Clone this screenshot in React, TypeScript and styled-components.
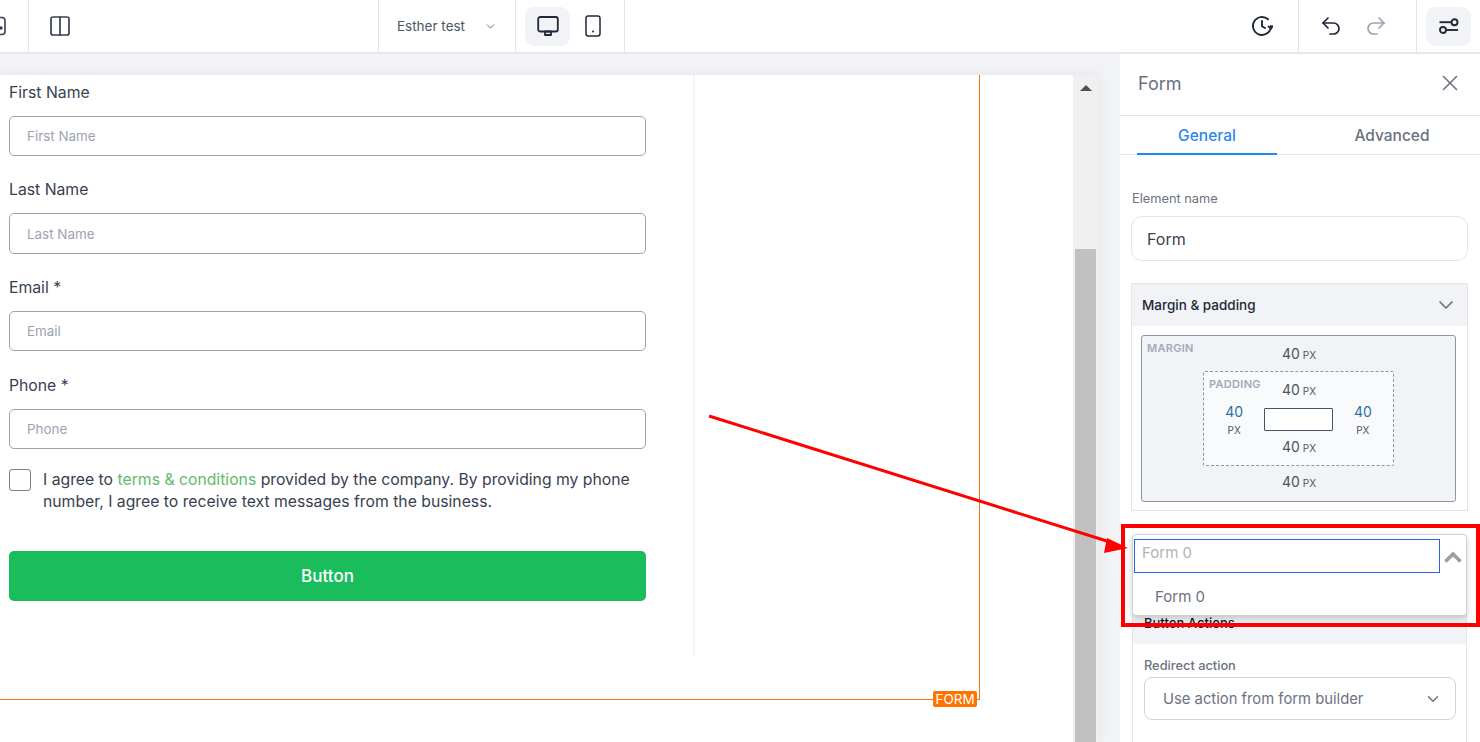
import React from 'react'
import styled, { createGlobalStyle } from 'styled-components'
import { ChevronDown, Columns2, Redo2, Undo2, X } from 'lucide-react'

const GlobalStyle = createGlobalStyle`
    html, body {
        margin: 0;
        height: 100%;
        overflow: hidden;
        background: #fff;
        font-family: Inter, "Liberation Sans", sans-serif;
    }
    * { box-sizing: border-box; }
`

const Screen = styled.div`
    position: relative;
    width: 1480px;
    height: 742px;
    overflow: hidden;
    display: flex;
    flex-direction: column;
`

const Toolbar = styled.header`
    height: 54px;
    flex: none;
    display: flex;
    background: #fff;
    border-bottom: 2px solid #e5e7eb;
`

const ToolGroup = styled.div<{ $width: number; $border?: boolean }>`
    width: ${p => p.$width}px;
    flex: none;
    display: flex;
    align-items: center;
    justify-content: center;
    border-right: ${p => (p.$border ? '1px solid #e2e5ea' : 'none')};
    overflow: hidden;
    color: #374151;
`

const ClippedGroup = styled(ToolGroup)`
    justify-content: flex-end;
    padding-right: 22px;
    svg { flex: none; }
`

const LayoutGroup = styled(ToolGroup)`
    justify-content: flex-start;
    padding-left: 19px;
`

const Spacer = styled.div`
    flex: 1;
`

const PageSelect = styled(ToolGroup)`
    gap: 19px;
    font-size: 13.5px;
    color: #4b5563;
`

const HistoryGroup = styled(ToolGroup)`
    padding-right: 4px;
`

const UndoGroup = styled(ToolGroup)`
    padding-right: 9px;
`

const IconButton = styled.div<{ $active?: boolean; $muted?: boolean }>`
    width: 45px;
    height: 39px;
    flex: none;
    display: flex;
    align-items: center;
    justify-content: center;
    border-radius: 9px;
    background: ${p => (p.$active ? '#f1f3f6' : 'transparent')};
    color: ${p => (p.$muted ? '#9ca3af' : '#1f2937')};
`

const Workspace = styled.div`
    flex: 1;
    display: flex;
    min-height: 0;
`

const CanvasArea = styled.main`
    width: 1120px;
    flex: none;
    padding: 21px 22px 0 0;
    background: #f1f3f6;
    display: flex;
`

const Canvas = styled.div`
    flex: 1;
    display: flex;
    background: #fff;
    box-shadow: 0 0 12px rgba(0, 0, 0, 0.07);
    overflow: hidden;
`

const PageBody = styled.div`
    flex: 1;
`

const Scrollbar = styled.div`
    width: 25px;
    flex: none;
    padding: 0 2px;
    background: #f0f0f0;
    display: flex;
    flex-direction: column;
    align-items: stretch;
`

const ScrollArrow = styled.div`
    width: 0;
    height: 0;
    margin: 10px auto 0;
    border-left: 6px solid transparent;
    border-right: 6px solid transparent;
    border-bottom: 6px solid #505050;
`

const ScrollThumb = styled.div`
    margin-top: 158px;
    flex: 1;
    background: #c1c1c1;
`

const FormFrame = styled.div`
    position: relative;
    width: 980px;
    height: 625px;
    border-right: 1px solid #f97316;
    border-bottom: 1px solid #f97316;
`

const FormTag = styled.span`
    position: absolute;
    right: 2px;
    bottom: -8px;
    width: 44px;
    height: 16px;
    border-radius: 2px;
    background: #ff7300;
    color: #fff;
    font-size: 13.5px;
    line-height: 16px;
    text-align: center;
`

const FormColumn = styled.div`
    width: 695px;
    height: 580px;
    padding: 4.8px 47px 0 9px;
    border-right: 2px solid #f3f4f6;
`

const Field = styled.div`
    margin-bottom: 21.3px;
`

const FieldLabel = styled.div`
    height: 24px;
    margin-bottom: 12px;
    font-size: 15.75px;
    line-height: 25px;
    color: #374151;
`

const TextBox = styled.div`
    height: 40.3px;
    padding-left: 17px;
    display: flex;
    align-items: center;
    border: 1px solid #a3a3a3;
    border-radius: 5px;
    font-size: 13.4px;
    color: #9ca3af;
`

const Consent = styled.div`
    display: flex;
    gap: 12px;
    margin-top: -1px;
`

const CheckBox = styled.div`
    width: 22px;
    height: 22px;
    flex: none;
    border: 1px solid #808080;
    border-radius: 3px;
`

const ConsentText = styled.p`
    margin: 0;
    font-size: 15.75px;
    line-height: 22px;
    color: #374151;
    span { color: #66b96a; }
`

const SubmitButton = styled.div`
    height: 50px;
    margin-top: 38px;
    display: flex;
    align-items: center;
    justify-content: center;
    border-radius: 5px;
    background: #19bd5c;
    color: #fff;
    font-size: 17px;
    font-weight: 500;
`

const Panel = styled.aside`
    width: 360px;
    flex: none;
    background: #fff;
    display: flex;
    flex-direction: column;
`

const PanelHead = styled.div`
    height: 62px;
    flex: none;
    padding: 0 17px 3px 18px;
    display: flex;
    align-items: center;
    justify-content: space-between;
    border-bottom: 1px solid #e2e5ea;
    font-size: 18px;
    color: #6b7280;
`

const Tabs = styled.div`
    height: 39px;
    flex: none;
    padding-left: 17px;
    display: flex;
    border-bottom: 1px solid #e2e5ea;
`

const Tab = styled.div<{ $active?: boolean }>`
    width: ${p => (p.$active ? 140 : 230)}px;
    height: 39px;
    flex: none;
    padding-top: ${p => (p.$active ? 2 : 0)}px;
    display: flex;
    align-items: center;
    justify-content: center;
    font-size: 15.5px;
    font-weight: 500;
    color: ${p => (p.$active ? '#2b86f5' : '#6b7280')};
    border-bottom: ${p => (p.$active ? '2px solid #1e88f5' : 'none')};
`

const PanelBody = styled.div`
    padding: 36px 12px 0 11px;
    display: flex;
    flex-direction: column;
`

const SmallLabel = styled.div`
    font-size: 12.8px;
    line-height: 16px;
    color: #6b7280;
`

const ElementLabel = styled(SmallLabel)`
    padding-left: 1px;
`

const NameInput = styled.div`
    height: 45px;
    margin-top: 9px;
    padding-left: 15px;
    display: flex;
    align-items: center;
    border: 1px solid #e2e5ea;
    border-radius: 11px;
    font-size: 16px;
    color: #374151;
`

const Accordion = styled.section`
    height: 228px;
    margin-top: 22px;
    border: 1px solid #e2e5ea;
`

const AccordionHead = styled.div`
    height: 42px;
    padding: 0 9px 0 10px;
    display: flex;
    align-items: center;
    justify-content: space-between;
    background: #f1f3f6;
    font-size: 13.5px;
    font-weight: 500;
    color: #1f2937;
    svg { color: #6b7280; }
`

const MarginBox = styled.div`
    position: relative;
    height: 167px;
    margin: 9px 11px 0 9px;
    padding-top: 8px;
    border: 1px solid #8f96a3;
    border-radius: 3px;
    background: #f1f3f6;
    display: flex;
    flex-direction: column;
    align-items: center;
`

const BoxTitle = styled.span`
    position: absolute;
    left: 5px;
    top: 5px;
    font-size: 11px;
    font-weight: 600;
    letter-spacing: 0.3px;
    color: #a3a9b8;
`

const PaddingBox = styled.div`
    position: relative;
    width: 191px;
    height: 95px;
    margin: 8px 0 6px;
    padding-top: 8px;
    border: 1px dashed #8f96a3;
    border-radius: 2px;
    background: #f8fafc;
    display: flex;
    flex-direction: column;
    align-items: center;
`

const Value = styled.div`
    height: 19px;
    padding-left: 1px;
    font-size: 14px;
    line-height: 19px;
    color: #4b5563;
    white-space: nowrap;
    small { font-size: 10px; margin-left: 3px; }
`

const MiddleRow = styled.div`
    width: 100%;
    margin: 5px 0 -3px;
    display: flex;
    align-items: flex-start;
    justify-content: center;
`

const SideValue = styled.div`
    width: 62px;
    text-align: center;
    font-size: 14px;
    line-height: 16px;
    color: #2f6f9f;
    small { display: block; font-size: 10px; line-height: 20px; color: #4b5563; }
`

const InnerBox = styled.div`
    width: 70px;
    height: 23px;
    margin-top: 4px;
    border: 1px solid #475569;
    border-radius: 1px;
    background: #fff;
`

const FormPicker = styled.div`
    position: relative;
    height: 70px;
    margin-top: 23px;
`

const PickerMenu = styled.div`
    position: absolute;
    z-index: 2;
    left: 1px;
    right: 1px;
    top: 0;
    height: 82px;
    padding: 4px 1px;
    background: #fff;
    border: 1px solid #cfd2d6;
    border-radius: 4px;
    box-shadow: 0 3px 6px rgba(0, 0, 0, 0.18);
`

const PickerRow = styled.div`
    display: flex;
    align-items: center;
`

const PickerInput = styled.div`
    width: 306px;
    height: 34px;
    flex: none;
    padding: 2px 0 0 7px;
    border: 1px solid #2563eb;
    font-size: 15px;
    line-height: 22px;
    color: #b3b3b3;
`

const PickerChevron = styled.svg`
    margin: 2px 0 0 4px;
    flex: none;
`

const PickerOption = styled.div`
    margin: 13px 0 0 21px;
    font-size: 15px;
    line-height: 22px;
    color: #6b7280;
`

const ActionsCard = styled.section`
    height: 200px;
    margin: 0 1px;
    border: 1px solid #e2e5ea;
`

const ActionsHead = styled.div`
    height: 39px;
    padding: 10px 0 0 11px;
    background: #f1f3f6;
    font-size: 13px;
    font-weight: 500;
    color: #111827;
`

const ActionsBody = styled.div`
    padding: 14px 10px 0 11px;
`

const ActionLabel = styled(SmallLabel)`
    font-weight: 500;
`

const ActionSelect = styled.div`
    height: 43px;
    margin-top: 3px;
    padding: 0 13px 0 18px;
    display: flex;
    align-items: center;
    justify-content: space-between;
    border: 1px solid #d1d5db;
    border-radius: 8px;
    font-size: 14.8px;
    color: #6b7280;
`

const Highlight = styled.div`
    position: absolute;
    z-index: 3;
    left: 1121px;
    top: 524px;
    width: 359px;
    height: 103px;
    border: 4px solid #ff0000;
    pointer-events: none;
`

const Arrow = styled.svg`
    position: absolute;
    z-index: 4;
    left: 700px;
    top: 405px;
`

const MonitorIcon = () => (
    <svg width="22" height="22" viewBox="0 0 22 22" fill="none" stroke="currentColor" strokeWidth="1.8" strokeLinejoin="round">
        <rect x="1.2" y="2" width="19.6" height="14.5" rx="2" />
        <rect x="8" y="16.5" width="6" height="3.5" />
    </svg>
)

const PhoneIcon = () => (
    <svg width="16" height="22" viewBox="0 0 16 22" fill="none" stroke="currentColor" strokeWidth="1.5">
        <rect x="1" y="1" width="14" height="20" rx="2.2" />
        <circle cx="8" cy="16.5" r="1" fill="currentColor" stroke="none" />
    </svg>
)

const HistoryIcon = () => (
    <svg width="22" height="22" viewBox="0 0 22 22" fill="none" stroke="#1f2937" strokeWidth="1.9" strokeLinecap="round" strokeLinejoin="round">
        <path d="M20 11a9 9 0 1 1-3-6.7" />
        <path d="M11 6v5.2l3 1.8" />
        <path d="M17.6 11.6 20 13.6l1.6-2.4" />
    </svg>
)

const SlidersIcon = () => (
    <svg width="20" height="16" viewBox="0 0 20 16" fill="none" stroke="currentColor" strokeWidth="1.9">
        <path d="M0.5 4.2H12" />
        <circle cx="15.5" cy="4.2" r="3" />
        <circle cx="4" cy="12" r="3" />
        <path d="M7.5 12H19" />
    </svg>
)

const fields = ['First Name', 'Last Name', 'Email *', 'Phone *']

const Px = () => <small>PX</small>

function App() {
    return (
        <Screen>
            <GlobalStyle />
            <Toolbar>
                <ClippedGroup $width={29} $border>
                    <svg width="18" height="20" viewBox="0 0 18 20" fill="none" stroke="#374151" strokeWidth="1.6">
                        <rect x="1" y="1.5" width="16" height="17" rx="3" />
                        <circle cx="13" cy="12" r="1" fill="#374151" />
                    </svg>
                </ClippedGroup>
                <LayoutGroup $width={350} $border>
                    <Columns2 size={24} strokeWidth={1.7} />
                </LayoutGroup>
                <PageSelect $width={137} $border>
                    <span>Esther test</span>
                    <ChevronDown size={13} strokeWidth={1.5} />
                </PageSelect>
                <ToolGroup $width={109} $border>
                    <IconButton $active><MonitorIcon /></IconButton>
                    <IconButton><PhoneIcon /></IconButton>
                </ToolGroup>
                <Spacer />
                <HistoryGroup $width={70} $border>
                    <HistoryIcon />
                </HistoryGroup>
                <UndoGroup $width={118} $border>
                    <IconButton><Undo2 size={24} strokeWidth={1.7} /></IconButton>
                    <IconButton $muted><Redo2 size={24} strokeWidth={1.7} /></IconButton>
                </UndoGroup>
                <ToolGroup $width={63}>
                    <IconButton $active><SlidersIcon /></IconButton>
                </ToolGroup>
            </Toolbar>
            <Workspace>
                <CanvasArea>
                    <Canvas>
                        <PageBody>
                            <FormFrame>
                                <FormColumn>
                                    {fields.map(name => (
                                        <Field key={name}>
                                            <FieldLabel>{name}</FieldLabel>
                                            <TextBox>{name.replace(' *', '')}</TextBox>
                                        </Field>
                                    ))}
                                    <Consent>
                                        <CheckBox />
                                        <ConsentText>
                                            I agree to <span>terms &amp; conditions</span> provided by the company. By providing my phone number, I agree to receive text messages from the business.
                                        </ConsentText>
                                    </Consent>
                                    <SubmitButton>Button</SubmitButton>
                                </FormColumn>
                                <FormTag>FORM</FormTag>
                            </FormFrame>
                        </PageBody>
                        <Scrollbar>
                            <ScrollArrow />
                            <ScrollThumb />
                        </Scrollbar>
                    </Canvas>
                </CanvasArea>
                <Panel>
                    <PanelHead>
                        <span>Form</span>
                        <X size={26} strokeWidth={1.5} />
                    </PanelHead>
                    <Tabs>
                        <Tab $active>General</Tab>
                        <Tab>Advanced</Tab>
                    </Tabs>
                    <PanelBody>
                        <ElementLabel>Element name</ElementLabel>
                        <NameInput>Form</NameInput>
                        <Accordion>
                            <AccordionHead>
                                <span>Margin &amp; padding</span>
                                <ChevronDown size={24} strokeWidth={1.7} />
                            </AccordionHead>
                            <MarginBox>
                                <BoxTitle>MARGIN</BoxTitle>
                                <Value>40<Px /></Value>
                                <PaddingBox>
                                    <BoxTitle>PADDING</BoxTitle>
                                    <Value>40<Px /></Value>
                                    <MiddleRow>
                                        <SideValue>40<small>PX</small></SideValue>
                                        <InnerBox />
                                        <SideValue>40<small>PX</small></SideValue>
                                    </MiddleRow>
                                    <Value>40<Px /></Value>
                                </PaddingBox>
                                <Value>40<Px /></Value>
                            </MarginBox>
                        </Accordion>
                        <FormPicker>
                            <PickerMenu>
                                <PickerRow>
                                    <PickerInput>Form 0</PickerInput>
                                    <PickerChevron width="18" height="12" viewBox="0 0 18 12" fill="none" stroke="#9e9e9e" strokeWidth="3.6">
                                        <path d="M1.5 10.5 9 3l7.5 7.5" />
                                    </PickerChevron>
                                </PickerRow>
                                <PickerOption>Form 0</PickerOption>
                            </PickerMenu>
                        </FormPicker>
                        <ActionsCard>
                            <ActionsHead>Button Actions</ActionsHead>
                            <ActionsBody>
                                <ActionLabel>Redirect action</ActionLabel>
                                <ActionSelect>
                                    <span>Use action from form builder</span>
                                    <ChevronDown size={18} strokeWidth={2} />
                                </ActionSelect>
                            </ActionsBody>
                        </ActionsCard>
                    </PanelBody>
                </Panel>
            </Workspace>
            <Highlight />
            <Arrow width="440" height="160" viewBox="0 0 440 160">
                <path d="M9 11 L410 137" stroke="#ff0000" strokeWidth="3" fill="none" />
                <path d="M428 143 L407 133 L404 148 Z" fill="#ff0000" />
            </Arrow>
        </Screen>
    )
}

export default App
